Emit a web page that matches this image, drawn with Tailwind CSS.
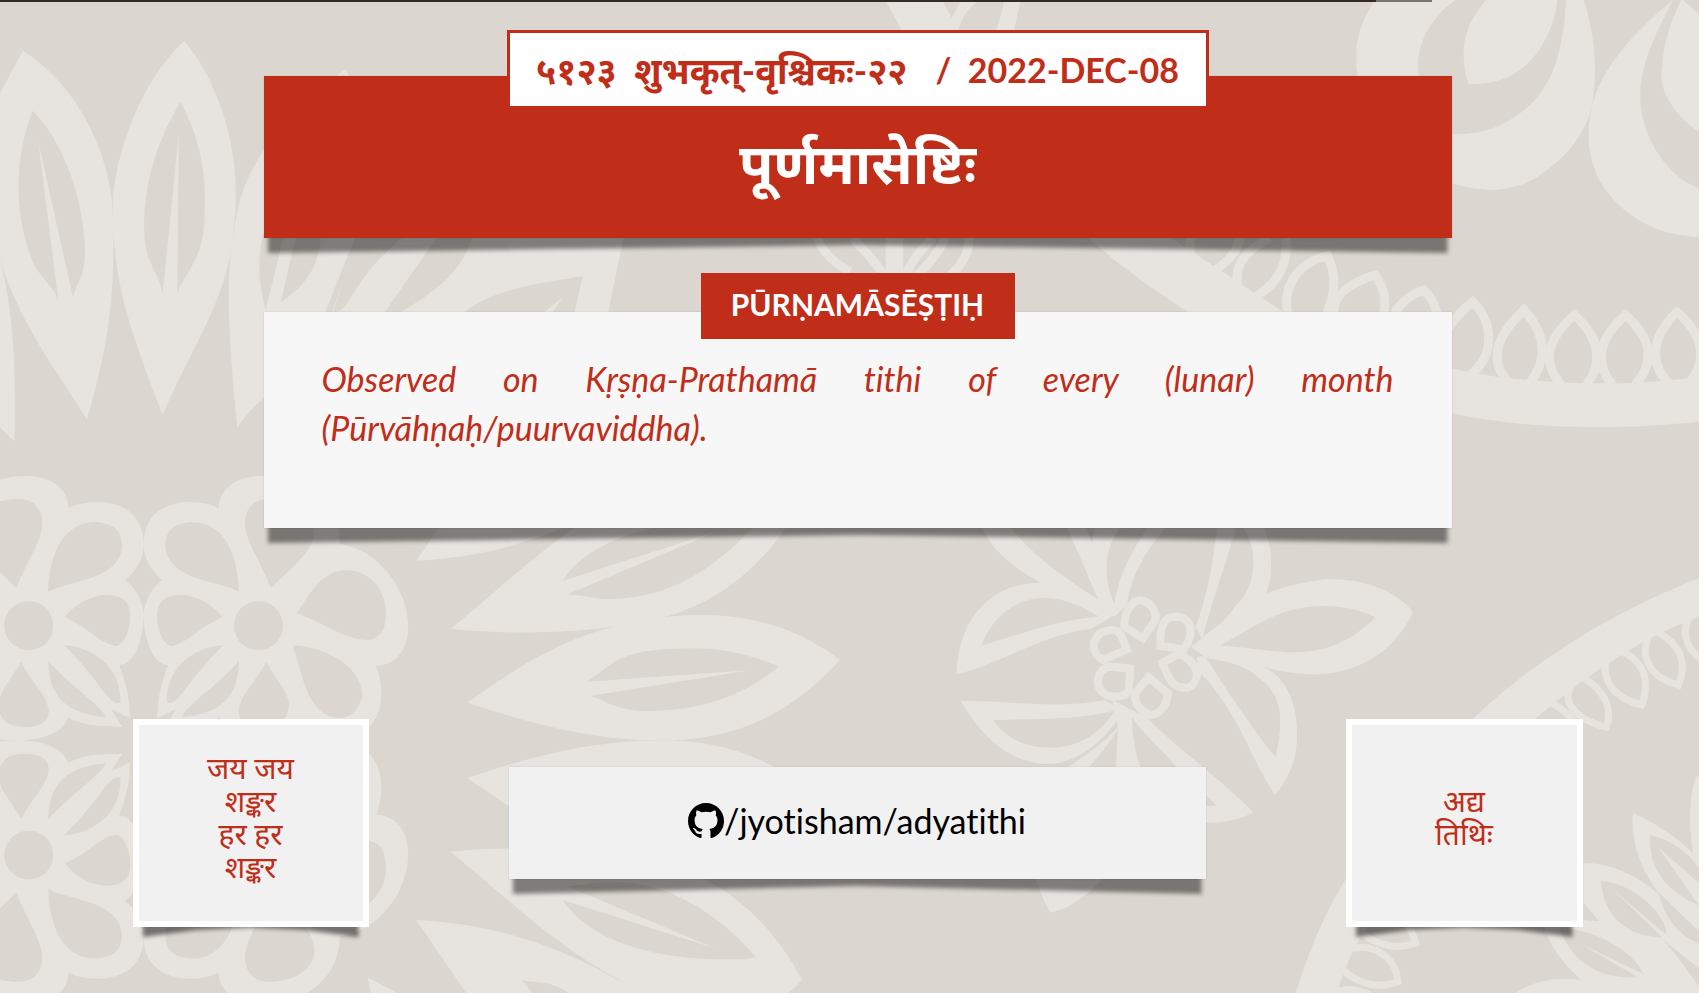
<!DOCTYPE html>
<html lang="sa">
<head>
<meta charset="utf-8">
<meta name="viewport" content="width=device-width, initial-scale=1">
<title>Adya Tithi</title>
<script src="https://cdn.jsdelivr.net/npm/@tailwindcss/browser@4"></script>
</head>
<body class="relative isolate min-h-screen overflow-x-hidden bg-[#dbd6cf] font-['Lato','Noto_Sans_Devanagari','Noto_Sans',sans-serif] text-[#c02d19] [font-variant-ligatures:no-common-ligatures]">

<!-- Floral wallpaper -->
<svg class="absolute inset-0 -z-20 h-full w-full" viewBox="0 0 1699 993" preserveAspectRatio="xMidYMid slice" aria-hidden="true">
  <defs>
    <path id="blossom" fill-rule="evenodd" d="M265,190 C265,110 300,66 350,66 C375,66 395,75 403,86 C405,20 440,-12 480,-12 C560,-12 625,60 627,192 C700,210 753,330 753,440 C753,510 730,555 694,558 C712,640 708,740 650,770 L600,745 C560,770 540,781 495,781 C450,781 410,755 405,712 C370,745 335,735 304,742 L325,688 L290,715 C290,650 300,600 310,555 C280,555 265,470 265,400 C268,360 280,320 300,300 C275,270 265,230 265,190Z
      M477,364 C450,364 432,397 432,437 C432,477 450,510 477,510 C502,510 522,477 522,437 C522,397 502,364 477,364Z
      M441,335 C440,260 425,126 353,126 C315,130 305,160 305,200 C310,300 400,300 441,335Z
      M500,325 C480,240 450,180 452,120 C455,75 475,56 495,56 C540,56 580,90 580,150 C580,220 530,270 500,325Z
      M547,400 C570,350 590,270 640,270 C690,275 712,340 712,400 C712,450 700,480 675,480 C630,475 600,430 547,400Z
      M540,496 C600,500 670,560 668,650 C660,690 650,714 622,714 C565,700 560,590 540,496Z
      M491,545 C510,600 535,640 533,680 C530,720 515,741 485,741 C450,741 440,720 440,690 C445,640 475,600 491,545Z
      M441,543 C440,620 425,700 335,712 C340,680 400,620 441,543Z
      M412,496 C360,500 305,560 308,668 C330,680 340,610 412,496Z
      M410,412 C395,375 360,345 335,345 C300,345 290,370 290,410 C290,460 305,500 318,498 C345,490 370,440 410,412Z"/>
    <g id="leaves">
      <path fill="#e7e4df" d="M862,668 C960,560 1080,405 1300,405 C1430,410 1500,480 1550,540 C1480,660 1390,781 1220,781 C1080,781 960,720 862,668Z"/>
      <path fill="#dbd6cf" d="M1083,605 C1130,560 1130,505 1280,505 C1350,505 1410,540 1437,560 C1390,620 1320,693 1190,693 C1130,690 1120,660 1087,648 L1383,571Z"/>
      <path fill="#e7e4df" d="M831,447 C920,330 1000,200 1105,97 C1200,0 1300,-20 1440,0 L1480,62 C1410,270 1320,370 1220,414 C1150,440 1020,475 831,447Z"/>
      <path fill="#dbd6cf" d="M1045,344 L1320,156 L1038,302 C1080,200 1180,115 1373,124 L1395,130 C1330,250 1240,360 1120,357 C1090,355 1080,345 1045,344Z"/>
      <path fill="#e7e4df" d="M768,242 C900,230 1000,180 1100,97 L1140,62 L1230,23 L860,23Z"/>
    </g>
  </defs>

  <!-- upper left -->
  <g transform="scale(.5421 .3333)">
    <g fill="#e7e4df">
      <path d="M42,152 C150,260 205,480 208,640 C212,800 210,1000 160,1258 C100,1100 40,980 0,780 L0,280Z"/>
      <path d="M340,122 C260,240 205,480 208,640 C210,860 240,990 300,1245 C350,1050 420,900 430,700 C450,480 410,260 340,122Z"/>
      <path d="M637,208 C540,320 450,480 435,660 C415,800 420,1000 438,1285 C450,1250 475,1210 490,1190 L490,936 L1122,936 L1150,714 L680,714 C710,500 690,350 637,208Z"/>
      <path d="M0,780 C20,900 30,1050 27,1325 L0,1283Z"/>
    </g>
    <g fill="#dbd6cf">
      <path d="M60,332 C20,500 30,680 65,800 C85,850 100,860 108,905 L70,420 L135,895 C140,840 162,830 156,720 C150,580 115,420 60,332Z"/>
      <path d="M333,306 C290,420 265,550 266,690 C268,800 290,800 300,882 L330,400 L327,884 C335,830 365,800 375,700 C385,530 370,420 333,306Z"/>
      <path d="M485,700 C474,790 478,860 490,930 L525,700Z"/>
      <path d="M545,714 L518,907 C570,850 588,790 592,714Z"/>
      <path d="M655,714 L600,936 L613,936 L637,820 L615,936 C650,936 640,850 742,714Z"/>
      <path d="M805,714 L710,936 L740,936 C830,850 855,790 870,714Z"/>
      <path d="M1075,828 C1000,850 920,860 856,936 L1004,936 L1037,893 L1020,936 L1060,936Z"/>
    </g>
  </g>

  <!-- upper right -->
  <g transform="translate(850 0) scale(.5415 .3333)">
    <g fill="#e7e4df">
      <path d="M65,0 L170,0 L188,55 L205,0 L315,0 L303,90 L95,90Z"/>
      <path d="M970,0 C935,80 930,160 938,228 C960,420 1040,560 1190,570 C1250,565 1280,520 1310,480 C1350,420 1365,360 1372,300 C1380,200 1375,100 1355,0Z"/>
      <path d="M1520,0 C1450,90 1385,210 1370,320 C1355,430 1370,520 1400,580 C1440,660 1500,710 1568,710 L1568,0Z"/>
      <path d="M430,700 L580,700 L800,936 L625,936 C560,870 500,800 430,700Z"/>
      <path d="M1112,1105 C1250,1160 1450,1160 1568,1130 L1568,1265 C1420,1290 1250,1290 1112,1240Z"/>
    </g>
    <g fill="#dbd6cf">
      <path d="M240,0 L285,0 C280,40 275,70 270,90 L200,90 C205,55 220,20 240,0Z"/>
      <path d="M1118,0 C1060,70 1045,150 1050,228 C1060,320 1080,400 1112,402 C1200,410 1280,320 1305,180 C1320,100 1320,50 1322,0Z"/>
      <path d="M1520,0 C1480,120 1455,220 1460,310 C1465,420 1510,530 1568,565 L1568,395 C1525,350 1490,270 1500,200 C1502,120 1520,50 1535,0Z"/>
      <path d="M1538,0 L1568,42 L1568,0Z"/>
    </g>
    <path fill="#e7e4df" d="M1175,0 C1130,80 1125,160 1142,252 C1200,255 1250,220 1280,130 C1300,70 1305,30 1306,0Z"/>
    <g fill="none" stroke="#e7e4df" stroke-width="9">
      <path vector-effect="non-scaling-stroke" d="M-60,714 C-50,760 -30,790 0,815 M5,714 C25,750 50,790 62,825 M74,714 L74,825 M90,714 L90,825 M155,714 C130,750 110,790 105,825 M220,714 C220,760 205,800 185,825 M175,714 C165,760 140,800 125,825"/>
      <path vector-effect="non-scaling-stroke" d="M629,714 C622,770 640,810 665,830 M720,714 C715,760 690,800 660,822 M805,714 C810,790 790,850 750,890 M718,870 C708,810 720,760 775,714"/>
      <path vector-effect="non-scaling-stroke" d="M808,940 C800,870 820,790 882,768 C900,830 895,890 880,940 M894,940 C890,890 920,850 970,825 C988,870 990,900 986,940 M1006,940 C1020,900 1040,880 1060,870 C1075,895 1080,915 1084,940"/>
      <path vector-effect="non-scaling-stroke" d="M1105,985 C1120,950 1130,930 1150,905 C1190,970 1190,1070 1145,1125"/>
      <path vector-effect="non-scaling-stroke" d="M1218,1150 C1180,1090 1190,1010 1245,930 C1290,1010 1285,1090 1255,1150"/>
      <path vector-effect="non-scaling-stroke" d="M1314,1155 C1278,1090 1285,1020 1338,945 C1388,1020 1390,1090 1360,1155"/>
      <path vector-effect="non-scaling-stroke" d="M1408,1155 C1375,1090 1380,1020 1432,945 C1484,1020 1485,1090 1450,1155"/>
      <path vector-effect="non-scaling-stroke" d="M1512,1150 C1475,1090 1480,1010 1527,937 C1575,1000 1585,1080 1550,1150"/>
    </g>
  </g>

  <!-- lower left -->
  <g transform="translate(0 480) scale(.5421 .3333)">
    <g fill="#e7e4df">
      <use href="#blossom"/>
      <use href="#blossom" transform="translate(530 0) scale(-1 1)"/>
      <use href="#blossom" transform="translate(0 1562) scale(1 -1)"/>
      <use href="#blossom" transform="translate(530 1562) scale(-1 -1)"/>
    </g>
    <use href="#leaves"/>
    <use href="#leaves" transform="translate(0 1562) scale(1 -1)"/>
    <path fill="#e7e4df" d="M678,1493 L740,1545 L685,1545Z"/>
    <path fill="#dbd6cf" d="M962,1500 C1000,1512 1015,1500 1055,1545 L985,1545Z"/>
  </g>

  <!-- lower right -->
  <g transform="translate(850 480) scale(.5415 .3333)">
    <g fill="#e7e4df">
      <path d="M650,475 C700,420 720,330 880,298 C960,295 1010,340 1040,395 C1010,500 950,575 870,582 C830,585 800,575 775,566 C740,540 700,530 655,530 L630,500Z"/>
      <path d="M638,440 C660,350 670,250 678,140 L765,140 C785,230 780,310 760,375 C730,410 690,440 650,475Z"/>
      <path d="M400,140 L585,140 C540,220 515,310 512,375 L488,410 L458,358 C440,290 420,210 400,140Z"/>
      <path d="M243,140 L295,140 C340,230 400,300 458,358 L490,400 L470,420 C430,340 290,310 243,140Z"/>
      <path d="M197,583 C197,480 230,310 352,308 C400,320 440,370 488,405 L445,447 C360,460 280,550 197,583Z"/>
      <path d="M204,663 C290,660 380,690 470,660 L505,690 C480,760 430,850 365,852 C290,850 240,760 204,663Z"/>
      <path d="M485,660 L550,715 C600,800 680,890 745,997 C720,1020 690,1030 657,1028 L603,861 C570,800 540,760 521,712 C520,780 530,830 537,865 L400,865 C430,830 470,790 495,740Z"/>
      <path d="M340,1180 L475,1180 C440,1250 405,1285 371,1298 C358,1270 350,1230 340,1180Z"/>
      <path d="M640,530 C740,520 800,560 820,680 C835,790 820,880 785,945 C740,840 720,700 645,575Z"/>
      <path d="M1568,295 C1400,400 1250,560 1150,717 L1265,717 C1350,600 1450,480 1568,410Z"/>
      <path d="M917,1194 C880,1290 850,1400 822,1545 L900,1545 C905,1500 930,1400 955,1340Z"/>
      <path d="M1354,1150 C1420,1145 1480,1220 1505,1260 C1470,1200 1440,1100 1446,998 C1500,1040 1540,1090 1557,1120 C1548,1030 1550,950 1562,890 L1568,890 L1568,1545 L1225,1545 C1260,1500 1310,1490 1350,1500 C1310,1440 1290,1390 1280,1330 L1354,1320Z"/>
    </g>
    <g fill="#dbd6cf">
      <path d="M682,497 C740,450 790,378 870,378 C920,378 950,395 970,412 C930,480 880,517 820,517 C770,515 730,500 682,497Z"/>
      <path d="M652,470 C670,350 700,230 712,140 L725,140 C760,220 745,330 715,370 C700,410 680,440 652,470Z"/>
      <path d="M500,140 C465,210 470,300 488,372 C495,290 520,210 552,140Z M436,140 L447,192 L452,140Z"/>
      <path d="M243,497 C260,420 300,354 360,354 C400,355 430,380 460,410 C380,420 320,460 243,497Z"/>
      <path d="M265,721 C340,715 420,720 488,692 C465,760 420,803 370,803 C320,803 285,770 265,721Z"/>
      <path d="M495,745 C480,790 460,825 440,865 L491,865Z M657,945 L677,978 L657,978Z"/>
      <path d="M657,533 C700,640 740,740 786,832 C800,730 800,650 760,600 C730,555 700,545 657,533Z"/>
      <path d="M1478,1065 C1475,1140 1490,1220 1568,1277 L1492,1100 L1568,1210 L1568,1165 C1540,1100 1510,1080 1478,1065Z"/>
      <path d="M1387,1203 C1390,1300 1430,1370 1500,1372 L1408,1228 L1508,1365 C1510,1310 1450,1210 1387,1203Z"/>
      <path d="M1310,1343 C1330,1440 1380,1500 1455,1492 L1345,1388 L1465,1482 C1440,1400 1370,1350 1310,1343Z"/>
      <path d="M1493,1236 C1500,1300 1530,1370 1568,1390 L1568,1355Z M1500,1378 C1530,1430 1550,1480 1568,1520 L1568,1465Z M1354,1268 L1384,1325 L1354,1320Z"/>
    </g>
    <g fill="#dbd6cf" stroke="#e7e4df" stroke-width="8">
      <path vector-effect="non-scaling-stroke" d="M507,440 C505,400 520,361 537,361 C555,365 570,400 562,425 L541,475Z"/>
      <path vector-effect="non-scaling-stroke" d="M573,498 C572,440 578,410 602,410 C635,410 635,470 616,508Z"/>
      <path vector-effect="non-scaling-stroke" d="M468,540 C440,520 445,450 485,450 C500,450 505,480 511,508Z"/>
      <path vector-effect="non-scaling-stroke" d="M517,566 L515,635 C500,660 458,655 458,605 C458,575 470,562 480,560Z"/>
      <path vector-effect="non-scaling-stroke" d="M551,592 L587,640 C585,680 570,705 555,705 C530,690 525,660 527,640Z"/>
      <path vector-effect="non-scaling-stroke" d="M577,548 L608,522 C645,550 650,600 625,623 C600,625 592,615 577,548Z"/>
    </g>
    <g fill="none" stroke="#e7e4df" stroke-width="7">
      <path vector-effect="non-scaling-stroke" d="M1350,590 C1305,640 1325,710 1396,742 C1410,690 1395,630 1350,590"/>
      <path vector-effect="non-scaling-stroke" d="M1400,525 C1385,580 1400,650 1462,675 C1480,600 1465,540 1420,510"/>
      <path vector-effect="non-scaling-stroke" d="M1475,465 C1460,520 1470,590 1530,615 C1548,540 1530,490 1490,455"/>
      <path vector-effect="non-scaling-stroke" d="M1575,540 C1535,500 1540,440 1550,410 M1260,720 C1262,690 1275,670 1290,665 C1310,680 1325,700 1335,720"/>
      <path vector-effect="non-scaling-stroke" d="M935,1340 C965,1400 1010,1410 1045,1390 C1040,1360 1035,1345 1025,1330 M930,1405 C980,1390 1010,1450 1012,1505 C970,1530 940,1510 910,1470 M895,1539 C920,1520 940,1530 960,1545"/>
    </g>
  </g>
</svg>

<div class="absolute inset-x-0 top-0 flex h-0.5">
  <div class="w-[81%] bg-[#332b24]"></div>
  <div class="w-[3.3%] bg-[#7a746e]"></div>
</div>

<main class="flex flex-col items-center pl-4 pt-19">

  <header class="relative flex h-[162px] w-full max-w-[1188px] flex-col items-center bg-[#c02d19] pt-[42px] shadow-[0_0_2px_rgba(0,0,0,0.12)]">
    <div class="absolute inset-x-1 -bottom-[15px] -z-10 h-8 blur-[2px]"><div class="h-full bg-black/45 [clip-path:polygon(0_0,100%_0,100%_100%,50%_75%,0_100%)]"></div></div>
    <p class="absolute -top-[46px] left-1/2 flex h-[79px] w-[702px] -translate-x-1/2 items-center justify-center gap-7 whitespace-pre border-3 border-[#c02d19] bg-white text-[34px] font-bold leading-[44px]"><span class="text-[36px]">५१२३  शुभकृत्-वृश्चिकः-२२</span><span>/  2022-DEC-08</span></p>
    <h1 class="text-[56px] font-bold leading-[90px] text-white">पूर्णमासेष्टिः</h1>
  </header>

  <section class="relative mt-[74px] min-h-[216px] w-full max-w-[1188px] bg-[#f7f7f7] px-[58px] pt-[42px] shadow-[0_0_2px_rgba(0,0,0,0.12)]">
    <div class="absolute inset-x-1 -bottom-[15px] -z-10 h-8 blur-[2px]"><div class="h-full bg-black/45 [clip-path:polygon(0_0,100%_0,100%_100%,50%_75%,0_100%)]"></div></div>
    <h2 class="absolute -top-[39px] left-1/2 flex h-[66px] w-[314px] -translate-x-1/2 items-center justify-center bg-[#c02d19] pb-1 text-[30px] font-bold text-white">PŪRṆAMĀSĒṢṬIḤ</h2>
    <p class="text-justify text-[34px] italic leading-[49px]">Observed on Kṛṣṇa-Prathamā tithi of every (lunar) month (Pūrvāhṇaḥ/puurvaviddha).</p>
  </section>

  <footer class="mt-[191px] flex w-full max-w-[1450px] items-center justify-between pb-16">
    <div class="relative flex h-[208px] w-[236px] items-center justify-center border-6 border-white bg-[#f1f1f1] pb-3 text-center text-[30px] leading-[33px]">
      <div class="absolute inset-x-1 -bottom-4 -z-10 h-8 blur-[2px]"><div class="h-full bg-black/50 [clip-path:polygon(0_0,100%_0,100%_100%,75%_78%,50%_70%,25%_78%,0_100%)]"></div></div>
      <p>जय जय<br>शङ्कर<br>हर हर<br>शङ्कर</p>
    </div>
    <div class="relative flex h-[112px] w-[697px] items-center justify-center bg-[#f1f1f1] pb-1 shadow-[0_0_2px_rgba(0,0,0,0.12)]">
      <div class="absolute inset-x-1 -bottom-[15px] -z-10 h-8 blur-[2px]"><div class="h-full bg-black/45 [clip-path:polygon(0_0,100%_0,100%_100%,50%_75%,0_100%)]"></div></div>
      <a href="https://github.com/jyotisham/adyatithi" class="flex items-center text-[34px] leading-[44px] text-black">
        <svg class="h-9 w-9" viewBox="0 0 16 16" fill="currentColor" aria-label="GitHub"><path d="M8 0C3.58 0 0 3.58 0 8c0 3.54 2.29 6.53 5.47 7.59.4.07.55-.17.55-.38 0-.19-.01-.82-.01-1.49-2.01.37-2.53-.49-2.69-.94-.09-.23-.48-.94-.82-1.13-.28-.15-.68-.52-.01-.53.63-.01 1.08.58 1.23.82.72 1.21 1.87.87 2.33.66.07-.52.28-.87.51-1.07-1.78-.2-3.64-.89-3.64-3.95 0-.87.31-1.59.82-2.15-.08-.2-.36-1.02.08-2.12 0 0 .67-.21 2.2.82.64-.18 1.32-.27 2-.27s1.36.09 2 .27c1.53-1.04 2.2-.82 2.2-.82.44 1.1.16 1.92.08 2.12.51.56.82 1.27.82 2.15 0 3.07-1.87 3.75-3.65 3.95.29.25.54.73.54 1.48 0 1.07-.01 1.93-.01 2.2 0 .21.15.46.55.38A8.01 8.01 0 0 0 16 8c0-4.42-3.58-8-8-8z"/></svg><span>/jyotisham/adyatithi</span>
      </a>
    </div>
    <div class="relative flex h-[208px] w-[237px] items-center justify-center border-6 border-white bg-[#f1f1f1] pb-3 text-center text-[30px] leading-[33px]">
      <div class="absolute inset-x-1 -bottom-4 -z-10 h-8 blur-[2px]"><div class="h-full bg-black/50 [clip-path:polygon(0_0,100%_0,100%_100%,75%_78%,50%_70%,25%_78%,0_100%)]"></div></div>
      <p>अद्य<br>तिथिः</p>
    </div>
  </footer>
</main>
</body>
</html>
